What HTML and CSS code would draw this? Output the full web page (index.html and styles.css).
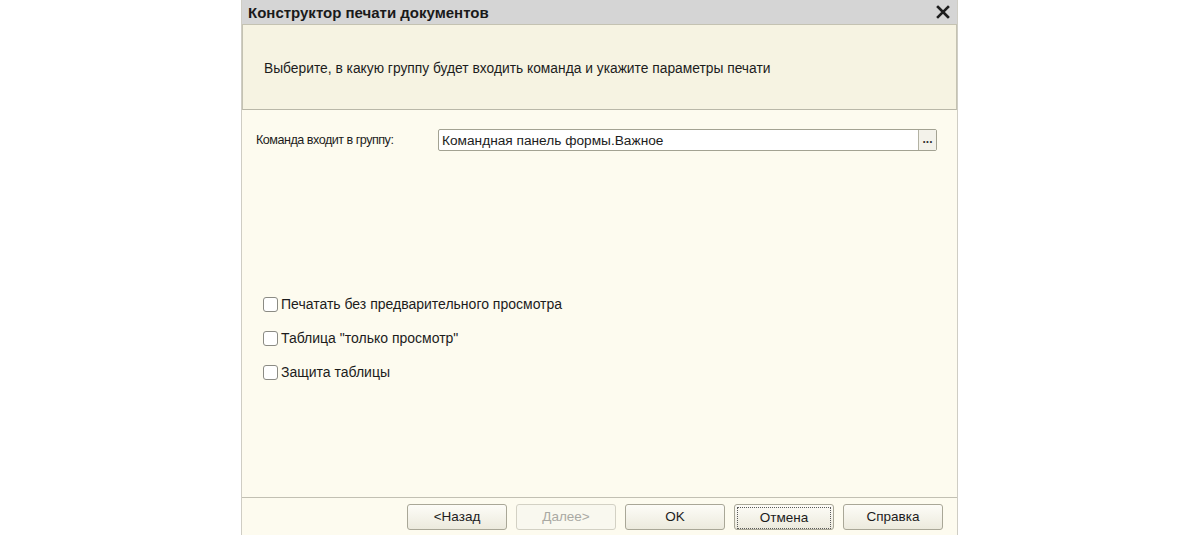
FILE: index.html
```html
<!DOCTYPE html>
<html lang="ru">
<head>
    <meta charset="UTF-8">
    <title>Конструктор печати документов</title>
    <link rel="stylesheet" href="styles.css">
</head>
<body>
    <div class="dialog">
        <div class="titlebar">
            <span class="title">Конструктор печати документов</span>
            <svg class="close" width="14" height="14" viewBox="0 0 14 14">
                <path d="M2 2 L12 12 M12 2 L2 12" stroke="#1e1e1e" stroke-width="2.6" stroke-linecap="square"/>
            </svg>
        </div>
        <div class="header">
            Выберите, в какую группу будет входить команда и укажите параметры печати
        </div>
        <div class="main">
            <div class="field-row">
                <span class="field-label">Команда входит в группу:</span>
                <div class="field-input">
                    <span class="field-value">Командная панель формы.Важное</span>
                    <span class="dots">...</span>
                </div>
            </div>
            <div class="checks">
                <label class="check"><span class="box"></span>Печатать без предварительного просмотра</label>
                <label class="check"><span class="box"></span>Таблица "только просмотр"</label>
                <label class="check"><span class="box"></span>Защита таблицы</label>
            </div>
        </div>
        <div class="footer">
            <button class="btn">&lt;Назад</button>
            <button class="btn disabled">Далее&gt;</button>
            <button class="btn gap">OK</button>
            <button class="btn focused"><span>Отмена</span></button>
            <button class="btn">Справка</button>
        </div>
    </div>
</body>
</html>
```

FILE: styles.css
```css
body {
    margin: 0;
    background-color: #ffffff;
    font-family: "Liberation Sans", Arial, sans-serif;
    font-size: 13px;
    color: #1c1c1c;
}
.dialog {
    margin-left: 241px;
    width: 717px;
    height: 535px;
    display: flex;
    flex-direction: column;
    background-color: #fdfbef;
    border-left: 1px solid #cfcdc4;
    border-right: 1px solid #cfcdc4;
    box-sizing: border-box;
}
.titlebar {
    height: 24px;
    background-color: #d5d5d5;
    display: flex;
    align-items: center;
    justify-content: space-between;
    padding: 0 7px 0 6px;
    flex-shrink: 0;
}
.title {
    font-weight: bold;
    font-size: 15px;
    color: #1a1a1a;
}
.close {
    display: block;
}
.header {
    height: 86px;
    box-sizing: border-box;
    background-color: #f6f3e2;
    border: 1px solid #c4c2b2;
    border-bottom-color: #b9b7a8;
    padding-left: 21px;
    display: flex;
    align-items: center;
    padding-top: 2px;
    font-size: 13.8px;
    flex-shrink: 0;
}
.main {
    flex: 1;
    padding: 19px 20px 0 14px;
}
.field-row {
    display: flex;
    align-items: center;
    height: 22px;
}
.field-label {
    width: 182px;
    font-size: 12.6px;
    letter-spacing: -0.5px;
}
.field-input {
    flex: 1;
    height: 22px;
    box-sizing: border-box;
    border: 1px solid #a3a292;
    border-radius: 2px;
    background-color: #ffffff;
    display: flex;
    align-items: center;
    font-size: 13.7px;
}
.field-value {
    flex: 1;
    padding-left: 3px;
}
.dots {
    width: 17px;
    height: 20px;
    border-left: 1px solid #b3b2a3;
    background-color: #f3f2ea;
    font-size: 12px;
    font-weight: bold;
    line-height: 18px;
    text-align: center;
    color: #333333;
}
.checks {
    margin-top: 136px;
    padding-left: 7px;
}
.check {
    display: flex;
    align-items: center;
    height: 34px;
    font-size: 14px;
}
.box {
    width: 15px;
    height: 15px;
    box-sizing: border-box;
    border: 1px solid #8b8b84;
    border-radius: 3px;
    background-color: #ffffff;
    margin-right: 3px;
}
.footer {
    height: 38px;
    flex-shrink: 0;
    border-top: 1px solid #c2c0b3;
    display: flex;
    align-items: center;
    justify-content: flex-end;
    gap: 9px;
    padding-right: 14px;
    box-sizing: border-box;
}
.btn {
    width: 100px;
    height: 26px;
    border: 1px solid #a9a797;
    border-radius: 3px;
    background: linear-gradient(#fdfcf7, #eceadd);
    font-family: "Liberation Sans", Arial, sans-serif;
    font-size: 13.5px;
    color: #1c1c1c;
    padding: 0;
}
.btn.disabled {
    border-color: #d3d1c4;
    color: #a9a9a3;
    background: #f9f8ef;
}
.btn.focused span {
    display: block;
    margin: 2px;
    height: 20px;
    line-height: 20px;
    border: 1px dotted #5a5a5a;
}
```
